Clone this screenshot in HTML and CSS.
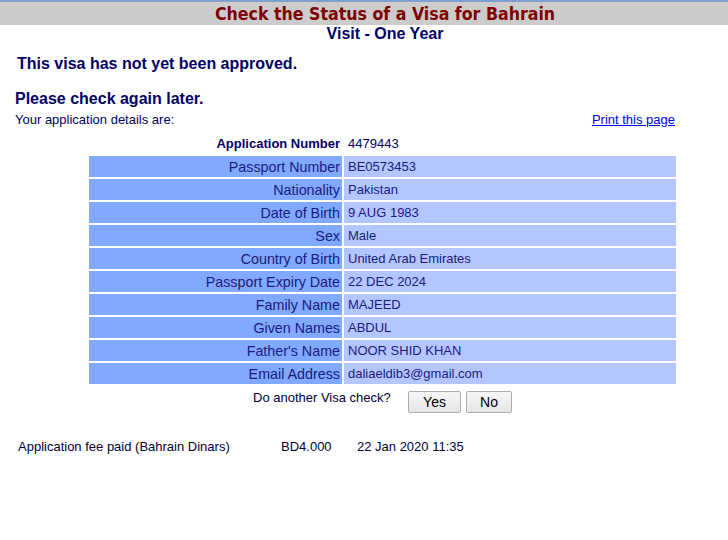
FILE: index.html
```html
<!DOCTYPE html>
<html>
<head>
<meta charset="utf-8">
<link rel="stylesheet" href="styles.css">
</head>
<body>
<div class="topstrip"></div>
<div class="titlebar"><div class="titlein">Check the Status of a Visa for Bahrain</div></div>
<div class="subtitle">Visit - One Year</div>
<div class="msg1">This visa has not yet been approved.</div>
<div class="msg2">Please check again later.</div>
<div class="detailsrow">
  <span>Your application details are:</span>
  <a href="#" class="print">Print this page</a>
</div>
<table class="details">
  <tr class="appnum"><td class="lbl">Application Number</td><td class="val">4479443</td></tr>
  <tr><td class="lbl">Passport Number</td><td class="val">BE0573453</td></tr>
  <tr><td class="lbl">Nationality</td><td class="val">Pakistan</td></tr>
  <tr><td class="lbl">Date of Birth</td><td class="val">9 AUG 1983</td></tr>
  <tr><td class="lbl">Sex</td><td class="val">Male</td></tr>
  <tr><td class="lbl">Country of Birth</td><td class="val">United Arab Emirates</td></tr>
  <tr><td class="lbl">Passport Expiry Date</td><td class="val">22 DEC 2024</td></tr>
  <tr><td class="lbl">Family Name</td><td class="val">MAJEED</td></tr>
  <tr><td class="lbl">Given Names</td><td class="val">ABDUL</td></tr>
  <tr><td class="lbl">Father's Name</td><td class="val">NOOR SHID KHAN</td></tr>
  <tr><td class="lbl">Email Address</td><td class="val">daliaeldib3@gmail.com</td></tr>
</table>
<div class="again">
  <span class="againq">Do another Visa check?</span>
  <button class="btn btn-yes">Yes</button>
  <button class="btn btn-no">No</button>
</div>
<div class="fee">
  <span class="feelbl">Application fee paid (Bahrain Dinars)</span>
  <span class="feeamt">BD4.000</span>
  <span class="feedate">22 Jan 2020 11:35</span>
</div>
</body>
</html>
```
FILE: styles.css
```css
html, body {
  margin: 0;
  padding: 0;
  background: #ffffff;
}
body {
  font-family: "Liberation Sans", Arial, sans-serif;
  color: #000066;
  width: 728px;
}
.topstrip {
  height: 2px;
  background: #7f9fcf;
}
.titlebar {
  height: 23px;
  background: #cccccc;
  padding-left: 42px;
}
.titlein {
  text-align: center;
  font-family: "DejaVu Sans Condensed", "DejaVu Sans", sans-serif;
  font-weight: bold;
  font-size: 17.6px;
  line-height: 24px;
  color: #800000;
}
.subtitle {
  padding-left: 42px;
  text-align: center;
  font-weight: bold;
  font-size: 16px;
  line-height: 18px;
  color: #000066;
}
.msg1 {
  font-weight: bold;
  font-size: 16px;
  line-height: 18px;
  margin: 12px 0 0 17px;
}
.msg2 {
  font-weight: bold;
  font-size: 16px;
  line-height: 18px;
  margin: 17px 0 0 15px;
}
.detailsrow {
  display: flex;
  justify-content: space-between;
  width: 660px;
  margin: 4px 0 0 15px;
  font-size: 13px;
  line-height: 15px;
  color: #000066;
}
.print {
  color: #0000ee;
  text-decoration: underline;
}
.details {
  margin: 4px 0 0 87px;
  width: 591px;
  border-collapse: separate;
  border-spacing: 2px;
  font-size: 14.3px;
}
.details td {
  height: 21px;
  padding: 0 2px;
  line-height: 16px;
  color: #1a1a80;
}
.details .lbl {
  width: 249px;
  text-align: right;
  background: #80a9ff;
}
.details .val {
  padding-left: 4px;
  font-size: 13px;
  background: #b4c6ff;
}
.details .appnum td {
  background: transparent;
  color: #000066;
}
.details .appnum .lbl {
  font-weight: bold;
  font-size: 13px;
}
.again {
  display: flex;
  align-items: flex-start;
  margin: 3px 0 0 253px;
  font-size: 13px;
}
.againq {
  line-height: 15px;
  margin-top: 1px;
  width: 155px;
  color: #000033;
}
.btn {
  font-family: "Liberation Sans", Arial, sans-serif;
  font-size: 14px;
  height: 22px;
  padding: 0;
  border: 1px solid #adadad;
  border-radius: 2px;
  background: linear-gradient(#f6f6f6, #e6e6e6);
  color: #000000;
  margin-top: 2px;
}
.btn-yes {
  width: 53px;
  margin-right: 5px;
}
.btn-no {
  width: 46px;
}
.fee {
  display: flex;
  margin: 26px 0 0 18px;
  font-size: 13px;
  line-height: 15px;
  color: #000033;
}
.feelbl { width: 263px; }
.feeamt { width: 76px; }
```
